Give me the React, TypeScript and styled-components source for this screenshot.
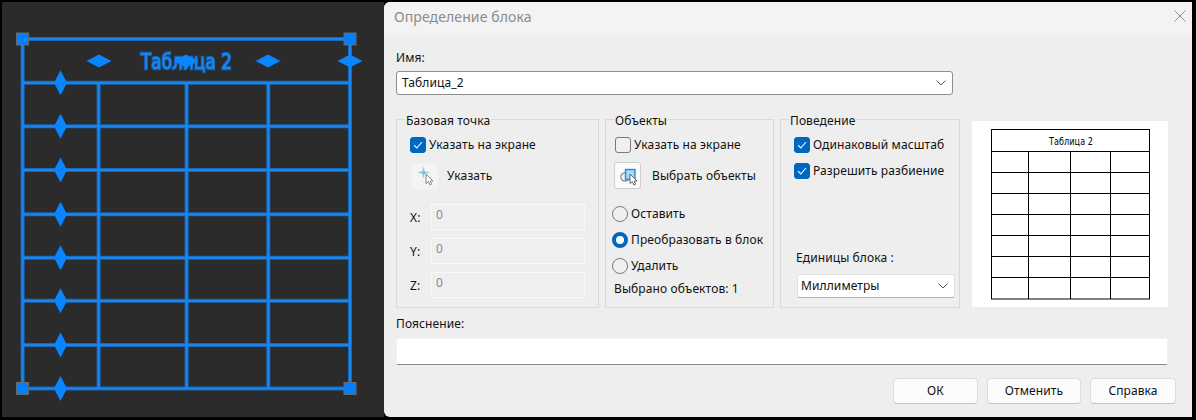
import styled, { createGlobalStyle } from "styled-components";

const GlobalStyle = createGlobalStyle`
  html, body {
    margin: 0;
    height: 100%;
    background: #000;
    overflow: hidden;
  }
  * {
    box-sizing: border-box;
  }
`;

const HOR = [39, 82.8, 126.3, 170, 214.3, 257.8, 300.8, 345, 388.5];
const VERT = [98.6, 186.6, 268.3];
const LEFT = 22.6;
const RIGHT = 350;

const PREVIEW_ROWS = [151, 172, 193, 214, 235, 256, 277];
const PREVIEW_COLS = [1028, 1070, 1110];

function Drawing() {
  const lines: [number, number, number, number][] = [
    ...HOR.map((y): [number, number, number, number] => [LEFT, y, RIGHT, y]),
    [LEFT, 39, LEFT, 388.5],
    [RIGHT, 39, RIGHT, 388.5],
    ...VERT.map((x): [number, number, number, number] => [x, 82.8, x, 388.5]),
  ];
  return (
    <svg width="382" height="415" viewBox="2 2 382 415">
      {lines.map(([x1, y1, x2, y2], i) => (
        <line key={i} x1={x1} y1={y1} x2={x2} y2={y2} stroke="#1769bb" strokeWidth="4" />
      ))}
      {lines.map(([x1, y1, x2, y2], i) => (
        <line key={i} x1={x1} y1={y1} x2={x2} y2={y2} stroke="#1a85ec" strokeWidth="2.2" />
      ))}
      <text
        x="141"
        y="69"
        textLength="91"
        lengthAdjust="spacingAndGlyphs"
        fontFamily="'DejaVu Sans', sans-serif"
        fontSize="22"
        fill="#1b8af0"
        stroke="#1264b4"
        strokeWidth="2.4"
        style={{ paintOrder: "stroke" }}
      >
        Таблица 2
      </text>
      {[99, 186, 268, 350].map((x) => (
        <polygon
          key={x}
          points={`${x - 12.5},61 ${x},54.5 ${x + 12.5},61 ${x},67.5`}
          fill="#0a84ff"
        />
      ))}
      {HOR.slice(1).map((y) => (
        <polygon
          key={y}
          points={`60.5,${y - 12.5} 67,${y} 60.5,${y + 12.5} 54,${y}`}
          fill="#0a84ff"
        />
      ))}
      {[
        [LEFT, 39],
        [RIGHT, 39],
        [LEFT, 388.5],
        [RIGHT, 388.5],
      ].map(([x, y]) => (
        <rect
          key={`${x}-${y}`}
          x={x - 6}
          y={y - 6}
          width="12"
          height="12"
          fill="#0080ff"
          stroke="#6a6a6a"
          strokeWidth="1"
        />
      ))}
    </svg>
  );
}

function TablePreview() {
  return (
    <svg width="196" height="186" viewBox="972 121 196 186">
      <rect x="991.5" y="129.5" width="158" height="169.5" fill="none" stroke="#000" />
      {PREVIEW_ROWS.map((y) => (
        <line key={y} x1="991.5" y1={y + 0.5} x2="1149.5" y2={y + 0.5} stroke="#000" />
      ))}
      {PREVIEW_COLS.map((x) => (
        <line key={x} x1={x + 0.5} y1="151" x2={x + 0.5} y2="299" stroke="#000" />
      ))}
      <text
        x="1049"
        y="145"
        textLength="44"
        lengthAdjust="spacingAndGlyphs"
        fontFamily="'DejaVu Sans', sans-serif"
        fontSize="11"
        fill="#000"
      >
        Таблица 2
      </text>
    </svg>
  );
}

function Chevron() {
  return (
    <svg width="10" height="6" viewBox="0 0 10 6">
      <path d="M0.5 0.5 L5 5 L9.5 0.5" fill="none" stroke="#555" strokeWidth="1" />
    </svg>
  );
}

function CursorShape() {
  return (
    <path
      d="M0 0 L0 9.5 L2.4 7.6 L4 11 L5.6 10.2 L4.2 7 L7 7 Z"
      fill="#fff"
      stroke="#555"
      strokeWidth="0.9"
    />
  );
}

function PickIcon() {
  return (
    <svg width="20" height="20" viewBox="0 0 20 20">
      <path d="M8.5 0.5 V10.5 M3.5 5.5 H13.5" stroke="#7fd0ea" strokeWidth="1.4" />
      <circle cx="8.5" cy="5.5" r="2" fill="#6cc6e6" />
      <g transform="translate(11 7)" opacity="0.75">
        <CursorShape />
      </g>
    </svg>
  );
}

function SelectIcon() {
  return (
    <svg width="20" height="20" viewBox="0 0 20 20">
      <circle cx="7" cy="11" r="4.2" fill="none" stroke="#8a8a8a" strokeWidth="1.2" />
      <rect x="7.5" y="3.5" width="9.5" height="10" fill="#a6d8f5" stroke="#1f8fd6" strokeWidth="1.4" />
      <g transform="translate(12 8)">
        <CursorShape />
      </g>
    </svg>
  );
}

const Page = styled.div`
  width: 1196px;
  height: 420px;
  padding: 2px 4px 3px 2px;
  display: flex;
  background: #000;
  font-family: "Noto Sans", sans-serif;
  font-size: 12px;
  line-height: 16px;
  letter-spacing: 0.1px;
  color: #111;
`;

const Canvas = styled.div`
  width: 382px;
  flex: none;
  background: #2b2b2b;
  svg {
    display: block;
  }
`;

const Dialog = styled.div`
  flex: 1;
  background: #eeeeee;
  border-radius: 6px 0 0 6px;
  overflow: hidden;
`;

const TitleBar = styled.div`
  height: 33px;
  padding: 0 6px 3px 10px;
  display: flex;
  align-items: center;
  justify-content: space-between;
  background: #f3f3f3;
  color: #8b8b8b;
  font-size: 14px;
`;

const CloseIcon = styled.svg`
  display: block;
  width: 12px;
  height: 12px;
  margin-bottom: 2px;
`;

const Content = styled.div`
  padding: 15px 24px 0 12px;
`;

const FieldLabel = styled.div`
  height: 16px;
`;

const NameCombo = styled.div`
  height: 24px;
  margin-top: 5px;
  width: 557px;
  padding: 0 6px 0 5px;
  display: flex;
  align-items: center;
  justify-content: space-between;
  background: #fff;
  border: 1px solid #8d8d8d;
  border-radius: 3px;
`;

const GroupRow = styled.div`
  display: flex;
  gap: 6px;
  height: 197px;
  margin-top: 16px;
`;

const Group = styled.fieldset<{ $width: number; $inset: number }>`
  width: ${(p) => p.$width}px;
  flex: none;
  margin: 0;
  padding: 10px 9px 9px ${(p) => p.$inset}px;
  border: 1px solid #d9d9d9;
  display: flex;
  flex-direction: column;
  min-width: 0;
`;

const GroupLegend = styled.legend<{ $inset: number }>`
  margin-left: ${(p) => 8 - p.$inset}px;
  padding: 0 1px;
  height: 16px;
  line-height: 19px;
`;

const CheckRow = styled.div<{ $gap?: number }>`
  display: flex;
  align-items: center;
  gap: 3px;
  height: 16px;
  margin-top: ${(p) => p.$gap ?? 0}px;
`;

const CheckBox = styled.span<{ $checked?: boolean }>`
  width: 16px;
  height: 16px;
  flex: none;
  display: flex;
  align-items: center;
  justify-content: center;
  border-radius: 3px;
  background: ${(p) => (p.$checked ? "#0067c0" : "#f0f0f0")};
  border: 1px solid ${(p) => (p.$checked ? "#0067c0" : "#7a7a7a")};
`;

const ActionRow = styled.div<{ $top: number; $gap: number; $shift: number }>`
  display: flex;
  align-items: center;
  gap: ${(p) => p.$gap}px;
  margin-top: ${(p) => p.$top}px;
  margin-left: ${(p) => p.$shift}px;
`;

const IconButton = styled.span<{ $flat?: boolean }>`
  width: 27px;
  height: 27px;
  flex: none;
  display: flex;
  align-items: center;
  justify-content: center;
  border-radius: 3px;
  background: ${(p) => (p.$flat ? "#f4f4f4" : "#fbfbfb")};
  border: 1px solid ${(p) => (p.$flat ? "#f1f1f1" : "#cfcfcf")};
`;

const ActionLabel = styled.span`
  margin-top: -2px;
`;

const CoordList = styled.div`
  display: flex;
  flex-direction: column;
  gap: 8px;
  margin-top: 14px;
`;

const CoordRow = styled.div`
  display: flex;
  align-items: center;
  justify-content: space-between;
  padding-right: 4px;
`;

const CoordLabel = styled.span`
  margin-top: 2px;
`;

const CoordInput = styled.div`
  width: 154px;
  height: 26px;
  padding: 2px 0 0 4px;
  background: #efefef;
  border: 1px solid #f8f8f8;
  color: #8a8a8a;
`;

const RadioList = styled.div`
  display: flex;
  flex-direction: column;
  gap: 10px;
  margin-top: 17px;
`;

const RadioRow = styled.div`
  display: flex;
  align-items: center;
  gap: 3px;
  height: 16px;
  margin-left: -3px;
`;

const Radio = styled.span<{ $on?: boolean }>`
  width: 16px;
  height: 16px;
  flex: none;
  border-radius: 50%;
  background: ${(p) => (p.$on ? "#fff" : "#efefef")};
  border: ${(p) => (p.$on ? "4.5px solid #0067c0" : "1px solid #7a7a7a")};
`;

const SelectedCount = styled.div`
  margin-top: 7px;
  margin-left: -1px;
`;

const UnitsLabel = styled.div`
  margin-top: auto;
  margin-left: 2px;
`;

const UnitsCombo = styled.div`
  height: 24px;
  width: 158px;
  margin: 8px 0 0 3px;
  padding: 0 6px 0 3px;
  display: flex;
  align-items: center;
  justify-content: space-between;
  flex: none;
  background: #fff;
  border: 1px solid #e2e2e2;
  border-bottom-color: #b5b5b5;
  border-radius: 3px;
`;

const Preview = styled.div`
  width: 196px;
  height: 186px;
  margin: 10px 0 0 6px;
  background: #fff;
  svg {
    display: block;
  }
`;

const NoteLabel = styled(FieldLabel)`
  margin-top: 8px;
`;

const NoteInput = styled.div`
  height: 27px;
  margin-top: 6px;
  background: #fff;
  border: 1px solid #f3f3f3;
  border-bottom: 1px solid #8a8a8a;
  border-radius: 2px;
`;

const ButtonRow = styled.div`
  display: flex;
  justify-content: flex-end;
  gap: 9px;
  margin: 13px -8px 0 0;
`;

const Button = styled.div<{ $width: number }>`
  width: ${(p) => p.$width}px;
  height: 26px;
  display: flex;
  align-items: center;
  justify-content: center;
  background: #fbfbfb;
  border: 1px solid #dcdcdc;
  border-bottom-color: #c4c4c4;
  border-radius: 4px;
`;

function Tick() {
  return (
    <svg width="10" height="8" viewBox="0 0 10 8">
      <path d="M1 4.2 L3.8 7 L9 1" fill="none" stroke="#fff" strokeWidth="1.1" />
    </svg>
  );
}

export default function App() {
  return (
    <Page>
      <GlobalStyle />
      <Canvas>
        <Drawing />
      </Canvas>
      <Dialog>
        <TitleBar>
          Определение блока
          <CloseIcon viewBox="0 0 12 12">
            <path d="M0.5 0.5 L11.5 11.5 M11.5 0.5 L0.5 11.5" stroke="#8f8f8f" strokeWidth="1" />
          </CloseIcon>
        </TitleBar>
        <Content>
          <FieldLabel>Имя:</FieldLabel>
          <NameCombo>
            Таблица_2
            <Chevron />
          </NameCombo>
          <GroupRow>
            <Group $width={203} $inset={13}>
              <GroupLegend $inset={13}>Базовая точка</GroupLegend>
              <CheckRow>
                <CheckBox $checked>
                  <Tick />
                </CheckBox>
                Указать на экране
              </CheckRow>
              <ActionRow $top={10} $gap={9} $shift={1}>
                <IconButton $flat>
                  <PickIcon />
                </IconButton>
                <ActionLabel>Указать</ActionLabel>
              </ActionRow>
              <CoordList>
                {["X:", "Y:", "Z:"].map((axis) => (
                  <CoordRow key={axis}>
                    <CoordLabel>{axis}</CoordLabel>
                    <CoordInput>0</CoordInput>
                  </CoordRow>
                ))}
              </CoordList>
            </Group>
            <Group $width={169} $inset={9}>
              <GroupLegend $inset={9}>Объекты</GroupLegend>
              <CheckRow>
                <CheckBox />
                Указать на экране
              </CheckRow>
              <ActionRow $top={9} $gap={11} $shift={-1}>
                <IconButton>
                  <SelectIcon />
                </IconButton>
                Выбрать объекты
              </ActionRow>
              <RadioList>
                <RadioRow>
                  <Radio />
                  Оставить
                </RadioRow>
                <RadioRow>
                  <Radio $on />
                  Преобразовать в блок
                </RadioRow>
                <RadioRow>
                  <Radio />
                  Удалить
                </RadioRow>
              </RadioList>
              <SelectedCount>Выбрано объектов: 1</SelectedCount>
            </Group>
            <Group $width={180} $inset={13}>
              <GroupLegend $inset={13}>Поведение</GroupLegend>
              <CheckRow>
                <CheckBox $checked>
                  <Tick />
                </CheckBox>
                Одинаковый масштаб
              </CheckRow>
              <CheckRow $gap={10}>
                <CheckBox $checked>
                  <Tick />
                </CheckBox>
                Разрешить разбиение
              </CheckRow>
              <UnitsLabel>Единицы блока :</UnitsLabel>
              <UnitsCombo>
                Миллиметры
                <Chevron />
              </UnitsCombo>
            </Group>
            <Preview>
              <TablePreview />
            </Preview>
          </GroupRow>
          <NoteLabel>Пояснение:</NoteLabel>
          <NoteInput />
          <ButtonRow>
            <Button $width={85}>ОК</Button>
            <Button $width={94}>Отменить</Button>
            <Button $width={86}>Справка</Button>
          </ButtonRow>
        </Content>
      </Dialog>
    </Page>
  );
}
